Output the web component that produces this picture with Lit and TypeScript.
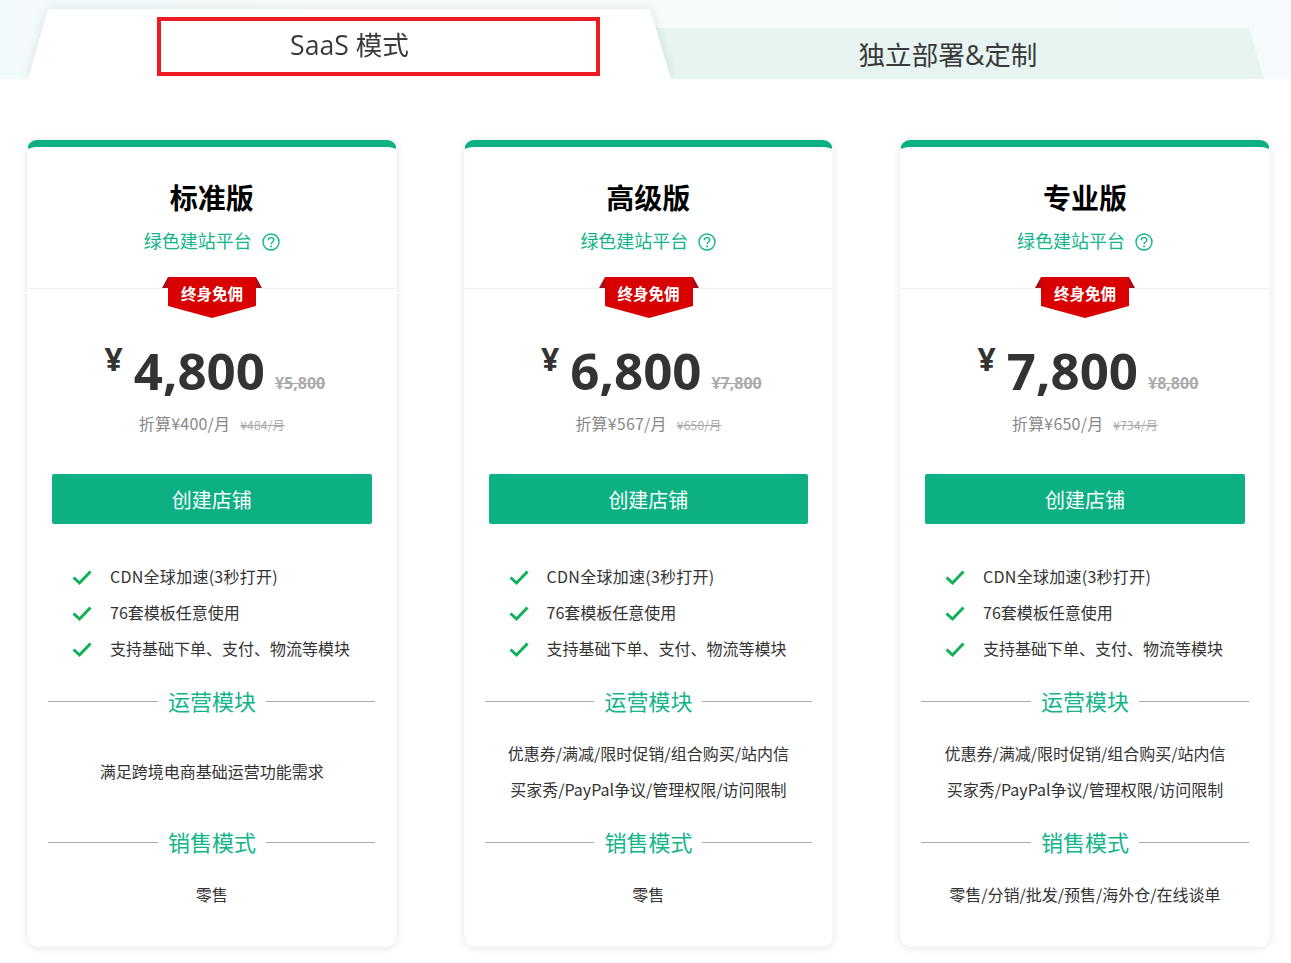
import { LitElement, html, css, svg } from "lit";
import { customElement } from "lit/decorators.js";

interface Plan {
  name: string; price: string; old: string; month: string; oldMonth: string;
  ops: string[]; sale: string;
}

const plans: Plan[] = [
  { name: "标准版", price: "4,800", old: "¥5,800", month: "折算¥400/月", oldMonth: "¥484/月",
    ops: ["满足跨境电商基础运营功能需求"], sale: "零售" },
  { name: "高级版", price: "6,800", old: "¥7,800", month: "折算¥567/月", oldMonth: "¥650/月",
    ops: ["优惠券/满减/限时促销/组合购买/站内信", "买家秀/PayPal争议/管理权限/访问限制"], sale: "零售" },
  { name: "专业版", price: "7,800", old: "¥8,800", month: "折算¥650/月", oldMonth: "¥734/月",
    ops: ["优惠券/满减/限时促销/组合购买/站内信", "买家秀/PayPal争议/管理权限/访问限制"], sale: "零售/分销/批发/预售/海外仓/在线谈单" },
];

const features = ["CDN全球加速(3秒打开)", "76套模板任意使用", "支持基础下单、支付、物流等模块"];

const check = svg`<path d="M1.5 9.5 L7.5 15 L18.5 3.5" fill="none" stroke="#0fb058" stroke-width="3"/>`;
const help = svg`<circle cx="9" cy="9" r="8" fill="none" stroke="#12b48a" stroke-width="1.4"/>
  <path d="M6.3 7.2 C6.3 5.5 7.6 4.6 9 4.6 C10.6 4.6 11.8 5.6 11.8 7 C11.8 8.9 9.1 9 9.1 11.2" fill="none" stroke="#12b48a" stroke-width="1.4"/>
  <circle cx="9.1" cy="13.4" r="0.95" fill="#12b48a"/>`;

@customElement("app-root")
export class AppRoot extends LitElement {
  static styles = css`
    :host {
      display: block;
      width: 1291px;
      height: 963px;
      overflow: hidden;
      background: #fff;
      font-family: "Open Sans", "Noto Sans CJK SC", sans-serif;
      color: #333;
    }
    .tabs {
      height: 79px;
      display: flex;
      align-items: flex-end;
      padding-left: 28px;
      background: linear-gradient(90deg, #f3fafb 0%, #f8fbfc 60%, #f6fafc 100%);
      overflow: hidden;
    }
    .active {
      position: relative;
      z-index: 1;
      width: 643px;
      height: 70px;
      filter: drop-shadow(0 0 5px rgba(0, 60, 40, 0.12));
    }
    .active-shape {
      height: 100%;
      background: #fff;
      clip-path: polygon(20px 0, 622px 0, 100% 100%, 0 100%);
      text-align: center;
      font-size: 26.6px;
      line-height: 72px;
      color: #3a3a3a;
    }
    .inactive {
      width: 632px;
      margin-left: -39px;
      height: 51px;
      background: #e7f4f1;
      clip-path: polygon(0 0, 617px 0, 100% 100%, 0 100%);
      text-align: center;
      font-size: 26.6px;
      line-height: 54px;
      color: #3a3a3a;
    }
    .mark {
      position: absolute;
      left: 129px;
      top: 8px;
      width: 443px;
      height: 59px;
      box-sizing: border-box;
      border: 4px solid #ed1c24;
    }
    .cards {
      display: grid;
      grid-template-columns: repeat(3, 369.67px);
      column-gap: 66.9px;
      padding: 61px 21px 0 27px;
    }
    .card {
      height: 807px;
      box-sizing: border-box;
      border: 1px solid #fbfbfb;
      border-top: 7px solid #0cb083;
      border-radius: 10px;
      background: #fff;
      box-shadow: 0 1px 8px rgba(0, 0, 0, 0.1);
      display: flex;
      flex-direction: column;
    }
    .head {
      height: 142px;
      box-sizing: border-box;
      padding-top: 32px;
      border-bottom: 1px solid #eee;
      position: relative;
      text-align: center;
    }
    .title {
      font-size: 28px;
      font-weight: 700;
      line-height: 38px;
      color: #000;
    }
    .sub {
      margin-top: 9px;
      display: flex;
      justify-content: center;
      align-items: center;
      gap: 10px;
      font-size: 18px;
      line-height: 30px;
      color: #12b48a;
      font-weight: 400;
    }
    .sub svg { width: 18px; height: 18px; margin-top: 2px; }
    .ribbon {
      position: absolute;
      left: 134px;
      top: 130px;
      width: 100px;
      height: 41px;
    }
    .ribbon svg { position: absolute; inset: 0; }
    .ribbon span {
      position: absolute;
      inset: 0 0 auto 0;
      text-align: center;
      font-size: 15.5px;
      font-weight: 700;
      line-height: 34px;
      color: #fff;
    }
    .price {
      margin-top: 46px;
      padding-left: 6px;
      display: flex;
      justify-content: center;
      align-items: flex-end;
      height: 70px;
    }
    .yen {
      font-size: 32px;
      font-weight: 700;
      line-height: 40px;
      align-self: flex-start;
      margin-top: 4px;
      margin-right: 11px;
      color: #333;
    }
    .amount {
      font-size: 51px;
      font-weight: 700;
      line-height: 70px;
      color: #333;
    }
    .old {
      margin-left: 10px;
      font-size: 16px;
      font-weight: 700;
      line-height: 22px;
      margin-bottom: 11px;
      color: #aaa;
      text-decoration: line-through;
    }
    .month {
      margin-top: 6px;
      text-align: center;
      font-family: "Noto Sans CJK SC", sans-serif;
      font-size: 16px;
      letter-spacing: 0.2px;
      line-height: 24px;
      color: #888;
      font-weight: 400;
    }
    .month s {
      margin-left: 10px;
      font-size: 12px;
      color: #aaa;
    }
    .buy {
      margin: 37px 24px 0;
      height: 50px;
      line-height: 53px;
      text-align: center;
      font-size: 20px;
      font-weight: 400;
      color: #fff;
      background: #0cb083;
      border-radius: 2px;
    }
    .features {
      list-style: none;
      margin: 34px 0 0;
      padding: 0 0 0 44px;
      font-family: "Noto Sans CJK SC", sans-serif;
    }
    .features li {
      display: flex;
      align-items: center;
      gap: 18px;
      height: 36px;
      font-size: 16px;
      font-weight: 400;
      color: #333;
    }
    .features li:first-child span { letter-spacing: 0.27px; }
    .features svg { width: 20px; height: 18px; flex: none; margin-top: 1px; }
    .rule {
      display: flex;
      align-items: center;
      gap: 10px;
      padding: 0 20.2px 0 20.4px;
      font-size: 22px;
      font-weight: 400;
      line-height: 36px;
      color: #12b48a;
    }
    .rule::before, .rule::after {
      content: "";
      flex: 1;
      height: 1px;
      margin-top: 1px;
      background: #aaa;
    }
    .rule.ops { margin-top: 17px; }
    .ops-text {
      height: 105px;
      box-sizing: border-box;
      padding-bottom: 2px;
      display: flex;
      flex-direction: column;
      justify-content: center;
      text-align: center;
      font-family: "Noto Sans CJK SC", sans-serif;
      font-size: 16px;
      font-weight: 400;
      line-height: 36px;
      color: #333;
    }
    .sale {
      margin-top: 16px;
      text-align: center;
      font-family: "Noto Sans CJK SC", sans-serif;
      font-size: 16px;
      font-weight: 400;
      line-height: 36px;
      color: #333;
    }
  `;

  private card(p: Plan) {
    return html`<section class="card">
      <div class="head">
        <div class="title">${p.name}</div>
        <div class="sub"><span>绿色建站平台</span><svg viewBox="0 0 18 18">${help}</svg></div>
        <div class="ribbon">
          <svg width="100" height="41" viewBox="0 0 100 41">
            <path d="M0 11 L6 0 L6 11 Z M100 11 L94 0 L94 11 Z" fill="#a50d1c"/>
            <path d="M6 0 H94 V29 L50 41 L6 29 Z" fill="#d80000"/>
          </svg>
          <span>终身免佣</span>
        </div>
      </div>
      <div class="price">
        <span class="yen">¥</span><span class="amount">${p.price}</span><span class="old">${p.old}</span>
      </div>
      <div class="month">${p.month}<s>${p.oldMonth}</s></div>
      <div class="buy">创建店铺</div>
      <ul class="features">
        ${features.map((f) => html`<li><svg viewBox="0 0 20 18">${check}</svg><span>${f}</span></li>`)}
      </ul>
      <div class="rule ops">运营模块</div>
      <div class="ops-text">${p.ops.map((o) => html`<div>${o}</div>`)}</div>
      <div class="rule">销售模式</div>
      <div class="sale">${p.sale}</div>
    </section>`;
  }

  render() {
    return html`
      <div class="tabs">
        <div class="active">
          <div class="active-shape">SaaS 模式</div>
          <div class="mark"></div>
        </div>
        <div class="inactive">独立部署&定制</div>
      </div>
      <div class="cards">${plans.map((p) => this.card(p))}</div>
    `;
  }
}
